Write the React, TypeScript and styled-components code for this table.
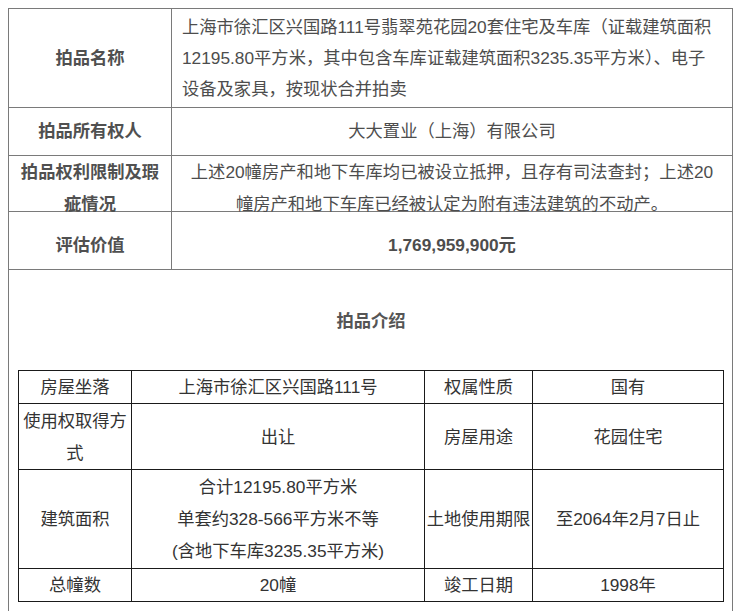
import React from 'react';
import styled, { createGlobalStyle } from 'styled-components';

const GlobalStyle = createGlobalStyle`
  html, body { margin: 0; padding: 0; background: #ffffff; }
  body { font-family: "Liberation Sans", "Noto Sans CJK SC", sans-serif; }
  * { box-sizing: border-box; }
`;

const Page = styled.div`
  padding: 8px 8px 0 8px;
`;

const OuterTable = styled.div`
  width: 725px;
  display: grid;
  grid-template-columns: 163px 561px;
  grid-template-rows: 99px 48px 56px 58px auto;
  border-left: 1px solid #7a7a7a;
  border-top: 1px solid #7a7a7a;
`;

const Cell = styled.div<{ $align?: 'top' | 'center'; $left?: boolean; $bold?: boolean; $padTop?: number; $lh?: number }>`
  display: flex;
  align-items: ${p => (p.$align === 'top' ? 'flex-start' : 'center')};
  justify-content: ${p => (p.$left ? 'flex-start' : 'center')};
  text-align: ${p => (p.$left ? 'left' : 'center')};
  border-right: 1px solid #7a7a7a;
  border-bottom: 1px solid #7a7a7a;
  padding: ${p => p.$padTop ?? 0}px 10px 0 10px;
  font-size: 17.3px;
  line-height: ${p => p.$lh ?? 31}px;
  color: #4d4d4d;
  font-weight: ${p => (p.$bold ? 700 : 400)};
  white-space: nowrap;
`;

const LabelCell = styled(Cell)`
  padding-left: 4px;
  padding-right: 4px;
  font-weight: 700;
  color: #505050;
`;

const WideCell = styled.div`
  grid-column: 1 / -1;
  border-right: 1px solid #7a7a7a;
  border-bottom: 1px solid #7a7a7a;
  padding: 0 8px 24px 9px;
`;

const SectionTitle = styled.div`
  margin: 35px 0 33px 0;
  height: 32px;
  line-height: 32px;
  text-align: center;
  font-size: 17.3px;
  font-weight: 700;
  color: #555555;
`;

const InnerTable = styled.div`
  width: 706px;
  display: grid;
  grid-template-columns: 113px 293px 108px 191px;
  grid-template-rows: 33px 66px 99px 33px;
  border-left: 1px solid #1a1a1a;
  border-top: 1px solid #1a1a1a;
`;

const InnerCell = styled.div`
  display: flex;
  align-items: center;
  justify-content: center;
  text-align: center;
  border-right: 1px solid #1a1a1a;
  border-bottom: 1px solid #1a1a1a;
  padding: 0 1px;
  font-size: 17.3px;
  line-height: 32px;
  color: #333333;
`;

const Lines = styled.div``;

const Line = styled.div`
  white-space: nowrap;
`;

export default function App() {
  return (
    <>
      <GlobalStyle />
      <Page>
        <OuterTable>
          <LabelCell>拍品名称</LabelCell>
          <Cell $left>
            <Lines>
              <Line>上海市徐汇区兴国路111号翡翠苑花园20套住宅及车库（证载建筑面积</Line>
              <Line>12195.80平方米，其中包含车库证载建筑面积3235.35平方米）、电子</Line>
              <Line>设备及家具，按现状合并拍卖</Line>
            </Lines>
          </Cell>

          <LabelCell>拍品所有权人</LabelCell>
          <Cell>大大置业（上海）有限公司</Cell>

          <LabelCell $align="top" $lh={32}>
            <Lines>
              <Line>拍品权利限制及瑕</Line>
              <Line>疵情况</Line>
            </Lines>
          </LabelCell>
          <Cell $align="top" $lh={32}>
            <Lines>
              <Line>上述20幢房产和地下车库均已被设立抵押，且存有司法查封；上述20</Line>
              <Line>幢房产和地下车库已经被认定为附有违法建筑的不动产。</Line>
            </Lines>
          </Cell>

          <LabelCell $padTop={10}>评估价值</LabelCell>
          <Cell $bold $padTop={10}>1,769,959,900元</Cell>

          <WideCell>
            <SectionTitle>拍品介绍</SectionTitle>
            <InnerTable>
              <InnerCell>房屋坐落</InnerCell>
              <InnerCell>上海市徐汇区兴国路111号</InnerCell>
              <InnerCell>权属性质</InnerCell>
              <InnerCell>国有</InnerCell>

              <InnerCell>使用权取得方式</InnerCell>
              <InnerCell>出让</InnerCell>
              <InnerCell>房屋用途</InnerCell>
              <InnerCell>花园住宅</InnerCell>

              <InnerCell>建筑面积</InnerCell>
              <InnerCell>
                <Lines>
                  <Line>合计12195.80平方米</Line>
                  <Line>单套约328-566平方米不等</Line>
                  <Line>(含地下车库3235.35平方米)</Line>
                </Lines>
              </InnerCell>
              <InnerCell>土地使用期限</InnerCell>
              <InnerCell>至2064年2月7日止</InnerCell>

              <InnerCell>总幢数</InnerCell>
              <InnerCell>20幢</InnerCell>
              <InnerCell>竣工日期</InnerCell>
              <InnerCell>1998年</InnerCell>
            </InnerTable>
          </WideCell>
        </OuterTable>
      </Page>
    </>
  );
}
